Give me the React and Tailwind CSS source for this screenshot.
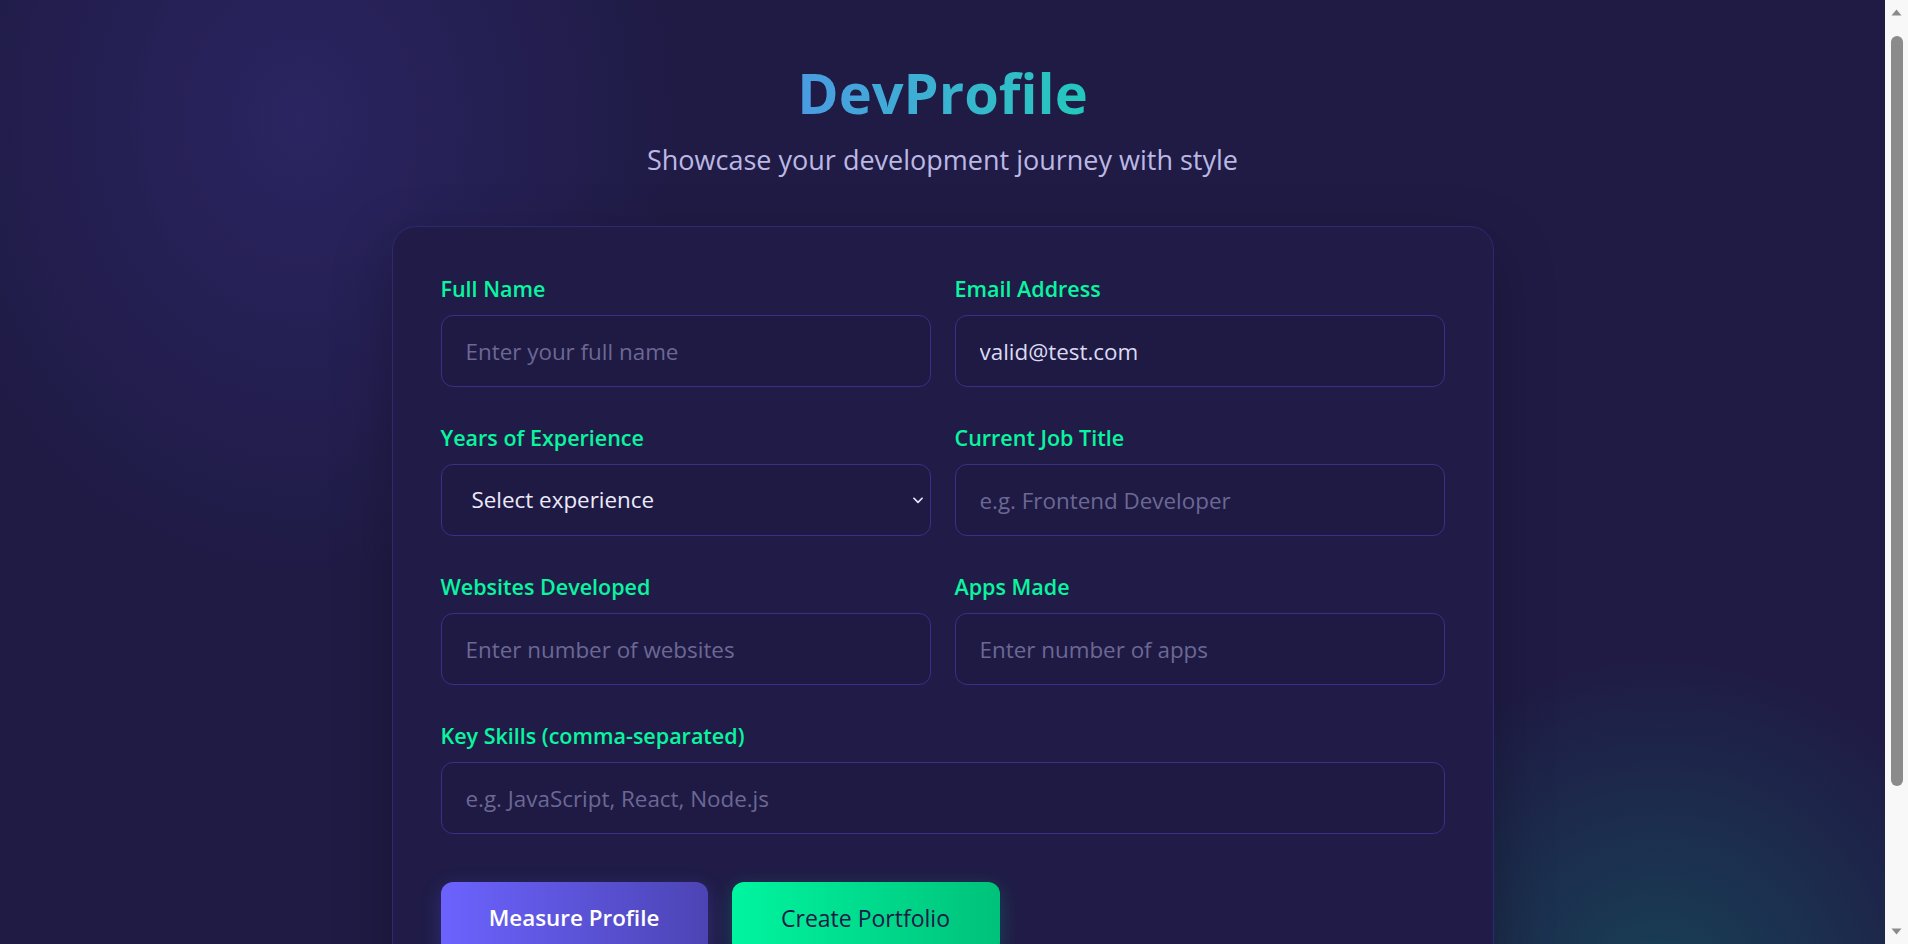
import React, { useState } from "react";

const Field = ({ label, children }) => (
  <div className="flex flex-col">
    <label className="text-[21.5px] leading-[28px] font-semibold text-[#0af5a0] mb-3">{label}</label>
    {children}
  </div>
);

const inputCls =
  "w-full h-[72px] px-6 rounded-xl bg-[#1e1a44] border border-[#38318a] text-[22.4px] text-[#dcdaf2] placeholder:text-[#6c6894] outline-none";

// window scrollbar strip as it shows in the screenshot
const ScrollStrip = () => (
  <div className="w-[23px] shrink-0 h-screen bg-[#f8f8f8] flex flex-col items-center">
    <svg className="mt-[9px] w-[11px] h-[7px] text-[#8b8b8b]" viewBox="0 0 11 7" fill="currentColor">
      <path d="M5.5 0.5L10.5 6.5H0.5z" />
    </svg>
    <div className="mt-[20px] w-[12px] h-[750px] rounded-full bg-[#8b8b8b]" />
    <div className="flex-1" />
    <svg className="mb-[9px] w-[11px] h-[7px] text-[#8b8b8b]" viewBox="0 0 11 7" fill="currentColor">
      <path d="M0.5 0.5H10.5L5.5 6.5z" />
    </svg>
  </div>
);

const App = () => {
  const [email, setEmail] = useState("valid@test.com");

  return (
    <div className="flex h-screen overflow-hidden" style={{ fontFamily: '"Open Sans", "Noto Sans", sans-serif' }}>
      <div className="flex-1 h-screen overflow-y-auto bg-[#1f1b45] bg-[image:radial-gradient(ellipse_380px_460px_at_300px_120px,rgba(52,44,120,0.55),transparent),radial-gradient(circle_at_1660px_1000px,rgba(22,78,92,0.75),transparent_340px)]">
        <div className="pt-[59px] pb-[144px]">
          {/* HEADER */}
          <div className="text-center">
            <h1 className="text-[56px] leading-[66px] font-bold bg-gradient-to-r from-[#4a9be2] to-[#22c8bc] bg-clip-text text-transparent inline-block">
              DevProfile
            </h1>
            <p className="mt-[17px] text-[27px] leading-[36px] text-[#bcb8e4]">Showcase your development journey with style</p>
          </div>

          {/* FORM CARD */}
          <div className="max-w-[1102px] mx-auto mt-[48px] bg-[#201c47] border border-[#2e2970] rounded-3xl p-12 shadow-[0_20px_60px_rgba(0,0,0,0.25)]">
            <div className="grid grid-cols-2 gap-x-6 gap-y-[37px]">
              <Field label="Full Name">
                <input className={inputCls} placeholder="Enter your full name" />
              </Field>
              <Field label="Email Address">
                <input className={inputCls} value={email} onChange={(e) => setEmail(e.target.value)} autoFocus />
              </Field>

              <Field label="Years of Experience">
                <div className="relative">
                  <select className={inputCls + " appearance-none pl-[30px] text-[#eceaf9]"} defaultValue="">
                    <option value="">Select experience</option>
                    <option value="0-1">0-1 years</option>
                    <option value="1-3">1-3 years</option>
                    <option value="3-5">3-5 years</option>
                    <option value="5+">5+ years</option>
                  </select>
                  <svg className="absolute right-[6px] top-1/2 -translate-y-1/2 w-[14px] h-[14px] text-[#e6e4f8] pointer-events-none" viewBox="0 0 24 24" fill="none" stroke="currentColor" strokeWidth={3} strokeLinecap="round" strokeLinejoin="round">
                    <path d="M5 9l7 7 7-7" />
                  </svg>
                </div>
              </Field>
              <Field label="Current Job Title">
                <input className={inputCls} placeholder="e.g. Frontend Developer" />
              </Field>

              <Field label="Websites Developed">
                <input className={inputCls} placeholder="Enter number of websites" />
              </Field>
              <Field label="Apps Made">
                <input className={inputCls} placeholder="Enter number of apps" />
              </Field>

              <div className="col-span-2">
                <Field label="Key Skills (comma-separated)">
                  <input className={inputCls} placeholder="e.g. JavaScript, React, Node.js" />
                </Field>
              </div>
            </div>

            {/* ACTIONS */}
            <div className="mt-12 flex gap-6">
              <button className="w-[267px] h-[72px] rounded-xl bg-gradient-to-r from-[#6c63ff] to-[#4c44b4] text-white text-[22.4px] font-semibold shadow-[0_6px_20px_rgba(108,99,255,0.25)]">
                Measure Profile
              </button>
              <button className="w-[268px] h-[72px] rounded-xl bg-gradient-to-r from-[#00f5a0] to-[#00c27a] text-[#1c1a46] text-[23px] font-medium shadow-[0_6px_20px_rgba(0,245,160,0.2)]">
                Create Portfolio
              </button>
            </div>
          </div>
        </div>
      </div>
      <ScrollStrip />
    </div>
  );
};

export default App;
